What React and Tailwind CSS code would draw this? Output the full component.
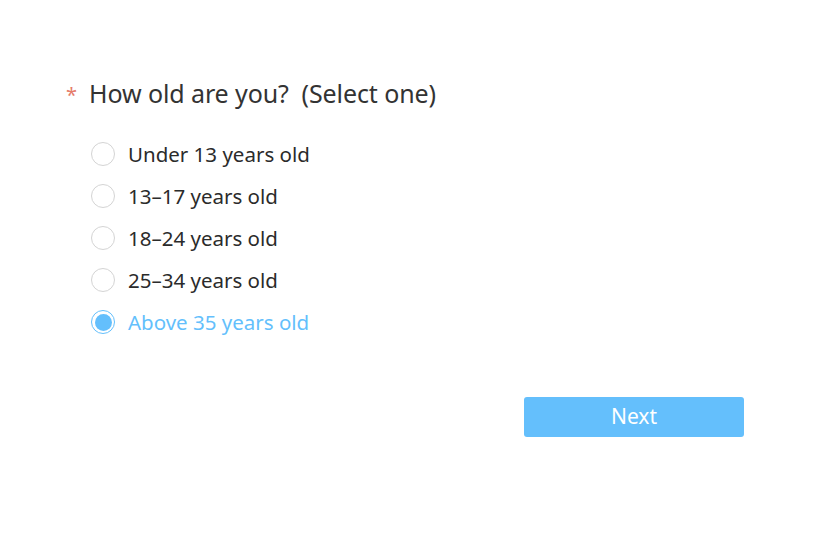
import React, { useState } from "react";

const options = [
  "Under 13 years old",
  "13–17 years old",
  "18–24 years old",
  "25–34 years old",
  "Above 35 years old",
];

export default function App() {
  const [selected, setSelected] = useState(4);
  return (
    <div
      className="w-[825px] h-[542px] bg-white"
      style={{ fontFamily: '"Noto Sans", "Open Sans", sans-serif' }}
    >
      <div className="pt-[76px] pl-[66px] pr-[81px]">
        <div className="flex items-center h-[36px]">
          <span className="text-[#e57c6a] text-[20px] w-[23px] leading-none pt-[2px]">*</span>
          <span className="text-[#333333] text-[25px] tracking-[-0.1px]">
            How old are you?&nbsp; (Select one)
          </span>
        </div>
        <div className="mt-[21px] pl-[25px] flex flex-col">
          {options.map((o, i) => {
            const on = i === selected;
            return (
              <label
                key={o}
                onClick={() => setSelected(i)}
                className="flex items-center h-[42px] cursor-pointer"
              >
                <span
                  className={
                    "w-[24px] h-[24px] rounded-full border flex items-center justify-center " +
                    (on ? "border-[#64bffc]" : "border-[#d4d4d4]")
                  }
                >
                  {on && <span className="w-[17px] h-[17px] rounded-full bg-[#64bffc]" />}
                </span>
                <span
                  className={
                    "ml-[13px] text-[20.5px] " + (on ? "text-[#64bffc]" : "text-[#2b2b2b]")
                  }
                >
                  {o}
                </span>
              </label>
            );
          })}
        </div>
        <div className="flex justify-end mt-[54px]">
          <button className="w-[220px] h-[40px] rounded-[3px] bg-[#64bffc] text-white text-[21px]">
            Next
          </button>
        </div>
      </div>
    </div>
  );
}
